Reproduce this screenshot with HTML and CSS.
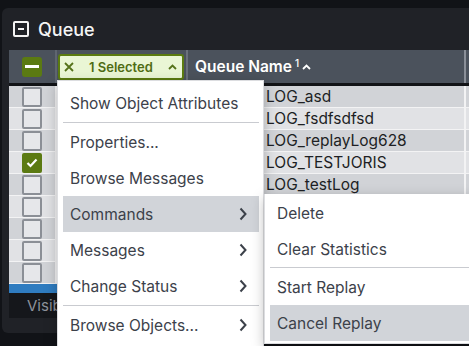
FILE: index.html
```html
<!DOCTYPE html>
<html lang="en">
<head>
    <meta charset="UTF-8">
    <title>Queue</title>
    <link rel="stylesheet" href="styles.css">
</head>
<body>
    <div class="panel">
        <div class="panel-title">
            <span class="collapse-icon"></span>
            Queue
        </div>
        <div class="table">
            <div class="thead">
                <div class="th th-check"><span class="cb cb-partial"></span></div>
                <div class="th th-sel">
                    <span class="chip">
                        <svg class="chip-x" width="10" height="10" viewBox="0 0 10 10"><path d="M1 1 L9 9 M9 1 L1 9" stroke="#55721a" stroke-width="1.8" fill="none"/></svg>
                        <span class="chip-label">1 Selected</span>
                        <svg class="chip-up" width="9" height="6" viewBox="0 0 9 6"><path d="M1 5 L4.5 1.5 L8 5" stroke="#55721a" stroke-width="1.8" fill="none"/></svg>
                    </span>
                </div>
                <div class="th th-name">
                    Queue Name <sup>1</sup>
                    <svg class="sort-icon" width="9" height="6" viewBox="0 0 9 6"><path d="M1 5 L4.5 1.5 L8 5" stroke="#fff" stroke-width="1.8" fill="none"/></svg>
                </div>
                <div class="th th-rest"></div>
            </div>
            <div class="tbody">
                <div class="row"><div class="cell-check"><span class="cb"></span></div><div class="cell-name">LOG_asd</div><div class="cell-rest"></div></div>
                <div class="row"><div class="cell-check"><span class="cb"></span></div><div class="cell-name">LOG_fsdfsdfsd</div><div class="cell-rest"></div></div>
                <div class="row"><div class="cell-check"><span class="cb"></span></div><div class="cell-name">LOG_replayLog628</div><div class="cell-rest"></div></div>
                <div class="row"><div class="cell-check"><span class="cb cb-checked"><svg width="12" height="10" viewBox="0 0 12 10"><path d="M1.5 5 L4.5 8 L10.5 1.5" stroke="#fff" stroke-width="2.2" fill="none"/></svg></span></div><div class="cell-name">LOG_TESTJORIS</div><div class="cell-rest"></div></div>
                <div class="row"><div class="cell-check"><span class="cb"></span></div><div class="cell-name">LOG_testLog</div><div class="cell-rest"></div></div>
                <div class="row"><div class="cell-check"><span class="cb"></span></div><div class="cell-name"></div><div class="cell-rest"></div></div>
                <div class="row"><div class="cell-check"><span class="cb"></span></div><div class="cell-name"></div><div class="cell-rest"></div></div>
                <div class="row"><div class="cell-check"><span class="cb"></span></div><div class="cell-name"></div><div class="cell-rest"></div></div>
                <div class="row"><div class="cell-check"><span class="cb"></span></div><div class="cell-name"></div><div class="cell-rest"></div></div>
            </div>
            <div class="hscroll"></div>
            <div class="tfoot">Visible: 9 of 9</div>
        </div>
    </div>

    <div class="menu">
        <div class="menu-item">Show Object Attributes</div>
        <div class="menu-sep"></div>
        <div class="menu-item">Properties...</div>
        <div class="menu-item">Browse Messages</div>
        <div class="menu-item active">Commands
            <svg class="arrow" width="8" height="14" viewBox="0 0 8 14"><path d="M1.5 1.5 L6.5 7 L1.5 12.5" stroke="#3c414a" stroke-width="2" fill="none"/></svg>
        </div>
        <div class="menu-item">Messages
            <svg class="arrow" width="8" height="14" viewBox="0 0 8 14"><path d="M1.5 1.5 L6.5 7 L1.5 12.5" stroke="#3c414a" stroke-width="2" fill="none"/></svg>
        </div>
        <div class="menu-item">Change Status
            <svg class="arrow" width="8" height="14" viewBox="0 0 8 14"><path d="M1.5 1.5 L6.5 7 L1.5 12.5" stroke="#3c414a" stroke-width="2" fill="none"/></svg>
        </div>
        <div class="menu-sep"></div>
        <div class="menu-item">Browse Objects...
            <svg class="arrow" width="8" height="14" viewBox="0 0 8 14"><path d="M1.5 1.5 L6.5 7 L1.5 12.5" stroke="#3c414a" stroke-width="2" fill="none"/></svg>
        </div>
    </div>

    <div class="menu submenu">
        <div class="menu-item">Delete</div>
        <div class="menu-item">Clear Statistics</div>
        <div class="menu-sep"></div>
        <div class="menu-item">Start Replay</div>
        <div class="menu-item active">Cancel Replay</div>
    </div>
</body>
</html>
```

FILE: styles.css
```css
body {
    margin: 0;
    width: 469px;
    height: 346px;
    overflow: hidden;
    background: #111317;
    font-family: 'Inter', 'Liberation Sans', sans-serif;
    padding-top: 8px;
    box-sizing: border-box;
}
.panel {
    margin-left: 2px;
    height: 325px;
    background: #202227;
    border-radius: 6px 0 0 6px;
    padding: 0 0 0 7px;
    display: flex;
    flex-direction: column;
}
.panel-title {
    height: 42px;
    display: flex;
    align-items: center;
    padding-left: 4px;
    color: #f4f4f4;
    font-size: 18px;
    font-weight: 500;
}
.collapse-icon {
    width: 12px;
    height: 12px;
    border: 2px solid #f4f4f4;
    border-radius: 2px;
    margin-right: 9px;
    position: relative;
}
.collapse-icon::after {
    content: '';
    position: absolute;
    left: 3px;
    top: 5px;
    width: 6px;
    height: 2px;
    background: #f4f4f4;
}
.table {
    display: flex;
    flex-direction: column;
}
.thead {
    display: flex;
    height: 33px;
    background: #4b525c;
    border-bottom: 3px solid #111316;
}
.th {
    display: flex;
    align-items: center;
}
.th-check {
    width: 46px;
    border-right: 2px solid #5f6670;
    justify-content: center;
}
.th-sel {
    width: 131px;
    border-right: 2px solid #6b717b;
    align-items: flex-start;
    padding-top: 4px;
    box-sizing: border-box;
    padding-left: 1px;
}
.th-name {
    width: 269px;
    padding-left: 7px;
    border-right: 2px solid #8a8f98;
    color: #fff;
    font-size: 15.5px;
    font-weight: 600;
}
.th-name sup {
    font-size: 10px;
    font-weight: 500;
    margin-left: 3px;
    margin-top: -8px;
}
.sort-icon {
    margin-left: 3px;
}
.th-rest {
    flex: 1;
}
.chip {
    width: 126px;
    height: 26px;
    box-sizing: border-box;
    border: 2px solid #5b7b10;
    border-radius: 3px;
    background: #eaf6d5;
    display: flex;
    align-items: center;
    padding: 0 5px 0 4px;
    color: #4f6c14;
    font-size: 13px;
    font-weight: 600;
}
.chip-label {
    margin-left: 15px;
    flex: 1;
}
.cb {
    width: 20px;
    height: 20px;
    box-sizing: border-box;
    border: 2px solid #8b8f96;
    border-radius: 2px;
    background: #e6e7ea;
    display: flex;
    align-items: center;
    justify-content: center;
}
.cb-partial {
    background: #5b7a12;
    border-color: #5b7a12;
    border-radius: 3px;
}
.cb-partial::after {
    content: '';
    width: 14px;
    height: 3px;
    background: #fff;
}
.cb-checked {
    background: #5b7a12;
    border-color: #5b7a12;
}
.row {
    display: flex;
    height: 21px;
    border-bottom: 1px solid #f3f3f4;
    background: #d1d3d7;
}
.row:nth-child(even) {
    background: #e1e2e5;
}
.cell-check {
    width: 46px;
    border-right: 2px solid #f3f3f4;
    display: flex;
    align-items: center;
    justify-content: center;
}
.cell-name {
    width: 198px;
    padding-left: 209px;
    border-right: 2px solid #f3f3f4;
    font-size: 15.5px;
    color: #1d1f24;
    line-height: 21px;
    white-space: nowrap;
    overflow: hidden;
}
.cell-rest {
    flex: 1;
}
.hscroll {
    height: 9px;
    background: #2f7cc0;
}
.tfoot {
    height: 25px;
    background: #15171b;
    color: #8d929b;
    font-size: 15px;
    padding-left: 18px;
    display: flex;
    align-items: center;
}
.menu {
    position: absolute;
    left: 57px;
    top: 80px;
    width: 207px;
    height: 280px;
    box-sizing: border-box;
    background: #fff;
    border: 1px solid #dcdde0;
    padding: 4px 4px 0 5px;
    box-shadow: 0 4px 12px rgba(0, 0, 0, 0.25);
    color: #3c414a;
    font-size: 15.5px;
}
.menu-item {
    height: 36px;
    display: flex;
    align-items: center;
    justify-content: space-between;
    padding: 0 12px 0 7px;
}
.menu-item.active {
    background: #d1d4d9;
}
.menu-sep {
    height: 1px;
    margin: 1px 0;
    background: #c9cbd0;
}
.submenu {
    left: 264px;
    top: 194px;
    width: 210px;
    height: 150px;
    padding: 1px 0 0 5px;
    border-top: none;
}
.submenu .menu-sep {
    margin: 0 0 1px;
}
```
